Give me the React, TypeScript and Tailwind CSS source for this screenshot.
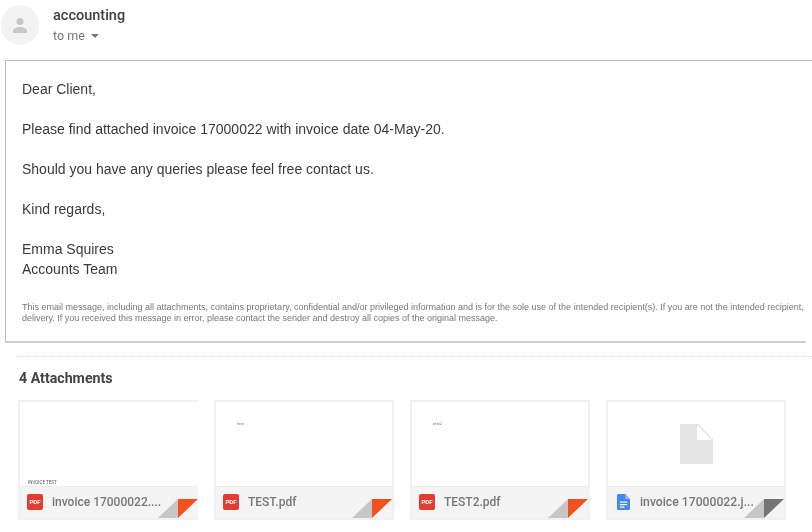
import React from "react";

function PdfIcon() {
  return (
    <div className="w-4 h-4 rounded-[2px] bg-[#e53c2f] flex items-center justify-center shrink-0">
      <span className="text-white text-[6px] font-bold leading-none">PDF</span>
    </div>
  );
}

function DocIcon() {
  return (
    <svg width="13" height="16" viewBox="0 0 14 16" preserveAspectRatio="none" className="shrink-0">
      <path d="M1.5 0H9l5 5v9.5a1.5 1.5 0 0 1-1.5 1.5h-11A1.5 1.5 0 0 1 0 14.500V1.500A1.500 1.500 0 0 1 1.500 0z" fill="#4285f4" />
      <path d="M9 0l5 5H9z" fill="#a1c2fa" />
      <rect x="3" y="7.500" width="8" height="1.200" fill="#fff" />
      <rect x="3" y="10" width="8" height="1.200" fill="#fff" />
      <rect x="3" y="12.500" width="5" height="1.200" fill="#fff" />
    </svg>
  );
}

function Fold({ color }: { color: string }) {
  return (
    <svg width="40" height="19" viewBox="0 0 40 19" className="absolute right-0 bottom-0">
      <path d="M0 19L20 0V19z" fill="#c6c6c6" />
      <path d="M20 0H40L20 19z" fill={color} />
    </svg>
  );
}

function Card({
  name,
  icon,
  fold,
  noRight,
  doc,
  children,
}: {
  name: string;
  icon: React.ReactNode;
  fold: string;
  noRight?: boolean;
  doc?: boolean;
  children?: React.ReactNode;
}) {
  return (
    <div
      className={`relative w-[180px] h-[120px] border-2 border-[#f1f1f1] bg-white flex flex-col ${
        noRight ? "border-r-0" : ""
      }`}
    >
      <div className="relative flex-1">{children}</div>
      <div
        className={`relative h-[32px] bg-[#f4f4f4] border-t border-[#ececec] flex items-center pb-[1px] ${
          doc ? "pl-[9px] gap-[10px]" : "pl-[7px] gap-[9px]"
        }`}
      >
        {icon}
        <span className={`font-medium text-[#777777] leading-none whitespace-nowrap ${doc ? "text-[12.2px]" : "text-[12px]"}`}>{name}</span>
        <Fold color={fold} />
      </div>
    </div>
  );
}

export default function App() {
  return (
    <div className="w-[812px] h-[532px] overflow-hidden bg-white font-['Roboto',sans-serif] blur-[0.4px]">
      <header className="h-[60px] flex pl-[1px] pt-[5px] gap-[14px]">
        <div className="w-[38px] h-[40px] rounded-full bg-[#f3f3f3] flex items-center justify-center">
          <svg width="16" height="16" viewBox="0 0 16 16">
            <circle cx="8" cy="4.500" r="3.500" fill="#c8c8c8" />
            <path d="M1 16v-2c0-2.500 4.500-4 7-4s7 1.500 7 4v2z" fill="#c8c8c8" />
          </svg>
        </div>
        <div className="pt-[4px]">
          <div className="text-[14.500px] font-medium text-[#3c4043] leading-[14px]">accounting</div>
          <div className="mt-[6px] flex items-center gap-[6px] text-[12.500px] text-[#777777] leading-[14px]">
            to me
            <span className="w-0 h-0 border-x-[4px] border-x-transparent border-t-[4px] border-t-[#777777]" />
          </div>
        </div>
      </header>

      <main className="ml-[5px] h-[283px] relative">
        <div className="absolute left-0 top-0 bottom-0 w-px bg-[#bdbdbd]" />
        <div className="absolute left-0 right-0 top-0 h-px bg-[#bdbdbd]" />
        <div className="absolute left-0 right-[6px] bottom-0 h-[2px] bg-[#cfcfcf]" />
        <div className="pl-[17px] pt-[18.500px] text-[14px] font-['Liberation_Sans',sans-serif] text-[#3a3a3a] leading-[20px]">
          <p>Dear Client,</p>
          <p className="mt-[20px]">Please find attached invoice 17000022 with invoice date 04-May-20.</p>
          <p className="mt-[20px]">Should you have any queries please feel free contact us.</p>
          <p className="mt-[20px]">Kind regards,</p>
          <p className="mt-[20px]">Emma Squires</p>
          <p>Accounts Team</p>
          <div className="mt-[23px] text-[9px] text-[#777777] leading-[11px] whitespace-nowrap">
            <p>
              This email message, including all attachments, contains proprietary, confidential and/or privileged information and is for the sole use of the intended recipient(s). If you are not the intended recipient,
            </p>
            <p>delivery. If you received this message in error, please contact the sender and destroy all copies of the original message.</p>
          </div>
        </div>
      </main>

      <section className="ml-[18px]">
        <div className="mt-[13px] border-t border-dotted border-[#d4d4d4]" />
        <h2 className="mt-[14px] ml-[1px] text-[14.200px] font-bold text-[#444444] leading-[14px]">4 Attachments</h2>
        <div className="mt-[15px] flex gap-[16px]">
          <Card name="invoice 17000022...." icon={<PdfIcon />} fold="#f4511e" noRight>
            <span className="absolute left-[8px] bottom-[1px] text-[4.500px] leading-none text-[#555555] whitespace-nowrap">INVOICE TEST</span>
          </Card>
          <Card name="TEST.pdf" icon={<PdfIcon />} fold="#f4511e">
            <span className="absolute left-[21px] top-[20px] text-[4px] leading-none text-[#777777]">test</span>
          </Card>
          <Card name="TEST2.pdf" icon={<PdfIcon />} fold="#f4511e">
            <span className="absolute left-[21px] top-[20px] text-[4px] leading-none text-[#777777]">test2</span>
          </Card>
          <Card name="invoice 17000022.j..." icon={<DocIcon />} fold="#757575" doc>
            <div className="absolute inset-0 flex items-center justify-center">
              <svg width="33" height="40" viewBox="0 0 33 40">
                <path d="M0 0H17V16H33V40H0z" fill="#e4e4e4" />
                <path d="M17 0L33 16" stroke="#e4e4e4" strokeWidth="1.500" fill="none" />
              </svg>
            </div>
          </Card>
        </div>
      </section>
    </div>
  );
}
